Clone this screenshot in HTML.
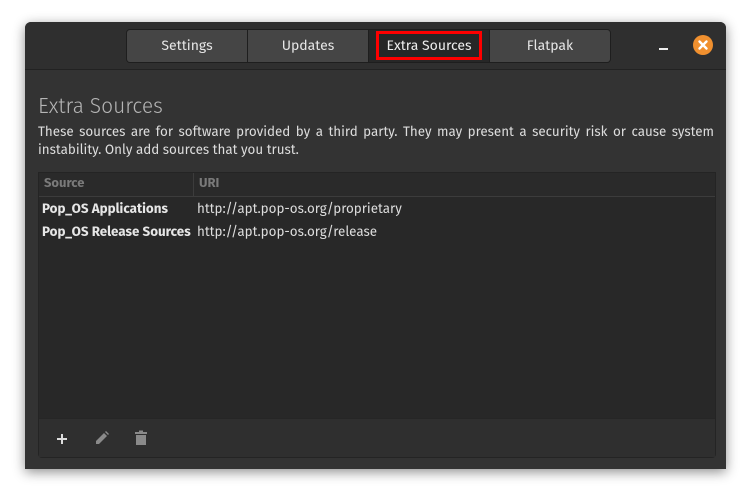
<!DOCTYPE html>
<html><head><style>
body{margin:0;width:752px;height:499px;background:#fff;font-family:"Fira Sans","Liberation Sans",sans-serif;position:relative;overflow:hidden}
.win{position:absolute;left:25px;top:22px;width:701px;height:447px;background:#333;border-radius:6px 6px 0 0;box-shadow:0 3px 12px rgba(0,0,0,.45);overflow:hidden}
.hdr{position:absolute;left:0;top:0;width:701px;height:47px;background:#2f2f2f;border-bottom:1px solid #222}
.tabs{position:absolute;left:101px;top:7px;height:32px;display:flex;border:1px solid #1e1e1e;border-radius:4px;overflow:hidden}
.tab{width:120px;height:32px;line-height:32px;text-align:center;color:#e6e6e6;font-size:14px;background:#454545;border-right:1px solid #1e1e1e}
.tab:last-child{border-right:none}
.tab.act{background:#272727}
.red{position:absolute;left:351px;top:9px;width:100px;height:23px;border:3px solid #f00;color:#eee;font-size:14px;text-align:center;line-height:23px}
.t{position:absolute;color:#ddd}
.list{position:absolute;left:13px;top:150px;width:676px;height:284px;background:#282828;border:1px solid #242424;border-radius:0 0 4px 4px}
.lh{height:23px;border-bottom:1px solid #3c3c3c;background:#2a2a2a;position:relative}
.tb{position:absolute;left:0;bottom:0;width:676px;height:38px;background:#2f2f2f;border-top:1px solid #262626}
</style></head><body>
<div class="win">
<div class="hdr">
 <div class="tabs"><div class="tab">Settings</div><div class="tab">Updates</div><div class="tab act"></div><div class="tab">Flatpak</div></div>
 <div class="red">Extra Sources</div>
 <div style="position:absolute;left:634px;top:26px;width:9px;height:2px;background:#eee"></div>
 <div style="position:absolute;left:668px;top:13px;width:20px;height:20px;border-radius:50%;background:#f0902f"><svg width="20" height="20"><path d="M6.5 6.5L13.5 13.5M13.5 6.5L6.5 13.5" stroke="#fff" stroke-width="2.4" stroke-linecap="round"/></svg></div>
</div>
<div class="t" style="left:13px;top:71px;font-size:21px;font-weight:300;color:#b5b5b5">Extra Sources</div>
<div class="t" style="left:13px;top:101px;width:676px;font-size:13.4px;line-height:18px;text-align:justify;text-align-last:left;color:#ddd">These sources are for software provided by a third party. They may present a security risk or cause system instability. Only add sources that you trust.</div>
<div class="list">
 <div class="lh"><span style="position:absolute;left:5px;top:3px;font-size:13px;font-weight:bold;color:#7a7a7a">Source</span><div style="position:absolute;left:154px;top:0;width:1px;height:23px;background:#3c3c3c"></div><span style="position:absolute;left:160px;top:3px;font-size:13px;font-weight:bold;color:#7a7a7a">URI</span></div>
 <div class="t" style="left:3px;top:27px;font-size:13.4px;font-weight:bold;color:#e6e6e6">Pop_OS Applications</div>
 <div class="t" style="left:158px;top:27px;font-size:13.4px;color:#ddd">http://apt.pop-os.org/proprietary</div>
 <div class="t" style="left:3px;top:50px;font-size:13.4px;font-weight:bold;color:#e6e6e6">Pop_OS Release Sources</div>
 <div class="t" style="left:158px;top:50px;font-size:13.4px;color:#ddd">http://apt.pop-os.org/release</div>
 <div class="tb">
  <svg style="position:absolute;left:17px;top:14px" width="12" height="12"><path d="M6 1V11M1 6H11" stroke="#ddd" stroke-width="2"/></svg>
  <svg style="position:absolute;left:55px;top:11px" width="16" height="16"><path d="M2 14L2 11L10 3L13 6L5 14Z" fill="#8a8a8a"/><path d="M11 2L12 1L15 4L14 5Z" fill="#8a8a8a"/></svg>
  <svg style="position:absolute;left:95px;top:11px" width="14" height="16"><rect x="1" y="2" width="12" height="2" fill="#8a8a8a"/><rect x="5" y="0.5" width="4" height="2" fill="#8a8a8a"/><rect x="2" y="5" width="10" height="10" fill="#8a8a8a"/></svg>
 </div>
</div>
</div>
</body></html>
